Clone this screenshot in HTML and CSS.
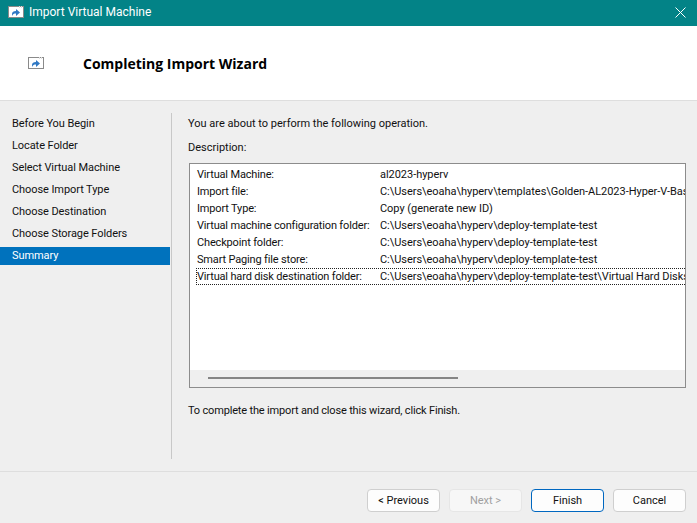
FILE: index.html
```html
<!DOCTYPE html>
<html lang="en">
<head>
<meta charset="utf-8">
<title>Import Virtual Machine</title>
<link rel="stylesheet" href="styles.css">
</head>
<body>
<div class="window">
  <header class="titlebar">
    <svg class="icon" width="16" height="12" viewBox="0 0 16 12"><rect x=".5" y=".5" width="15" height="11" fill="#fff" stroke="#8a8a8a"/><rect x="11" y="0" width="1" height="2" fill="#ddd"/><rect x="13" y="0" width="1" height="2" fill="#ddd"/><path d="M4 10V8c0-2 1.500-3 4-3V3l4 3.500L8 10V7.500c-2 0-3 .5-4 2.500z" fill="#2f78c4"/></svg>
    <span class="title">Import Virtual Machine</span>
    <svg class="close" width="11" height="11" viewBox="0 0 11 11"><path d="M.5.5l10 10M10.500.5l-10 10" stroke="#fff" fill="none"/></svg>
  </header>
  <section class="banner">
    <svg class="banner-icon" width="16" height="12" viewBox="0 0 16 12"><rect x=".5" y=".5" width="15" height="11" fill="#fff" stroke="#8a8a8a"/><rect x="11" y="0" width="1" height="2" fill="#ddd"/><rect x="13" y="0" width="1" height="2" fill="#ddd"/><path d="M4 10V8c0-2 1.500-3 4-3V3l4 3.500L8 10V7.500c-2 0-3 .5-4 2.500z" fill="#2f78c4"/></svg>
    <h1 class="heading">Completing Import Wizard</h1>
  </section>
  <main class="body">
    <nav class="steps">
      <div class="step">Before You Begin</div>
      <div class="step">Locate Folder</div>
      <div class="step">Select Virtual Machine</div>
      <div class="step">Choose Import Type</div>
      <div class="step">Choose Destination</div>
      <div class="step">Choose Storage Folders</div>
      <div class="step current">Summary</div>
    </nav>
    <div class="content">
      <p class="intro">You are about to perform the following operation.</p>
      <p class="desc">Description:</p>
      <div class="listbox">
        <div class="rows">
          <div class="row"><span class="key">Virtual Machine:</span><span class="val">al2023-hyperv</span></div>
          <div class="row"><span class="key">Import file:</span><span class="val">C:\Users\eoaha\hyperv\templates\Golden-AL2023-Hyper-V-Bas</span></div>
          <div class="row"><span class="key">Import Type:</span><span class="val">Copy (generate new ID)</span></div>
          <div class="row"><span class="key">Virtual machine configuration folder:</span><span class="val">C:\Users\eoaha\hyperv\deploy-template-test</span></div>
          <div class="row"><span class="key">Checkpoint folder:</span><span class="val">C:\Users\eoaha\hyperv\deploy-template-test</span></div>
          <div class="row"><span class="key">Smart Paging file store:</span><span class="val">C:\Users\eoaha\hyperv\deploy-template-test</span></div>
          <div class="row focused"><span class="key">Virtual hard disk destination folder:</span><span class="val">C:\Users\eoaha\hyperv\deploy-template-test\Virtual Hard Disks</span></div>
        </div>
        <div class="hscroll"><div class="thumb"></div></div>
      </div>
      <p class="outro">To complete the import and close this wizard, click Finish.</p>
    </div>
  </main>
  <footer class="footer">
    <button class="btn">&lt; Previous</button>
    <button class="btn" disabled>Next &gt;</button>
    <button class="btn primary">Finish</button>
    <button class="btn">Cancel</button>
  </footer>
</div>
</body>
</html>
```
FILE: styles.css
```css
* { box-sizing: border-box; }
html, body { margin: 0; padding: 0; }
body {
  width: 697px; height: 523px; overflow: hidden;
  font-family: Roboto, "Open Sans", sans-serif;
  font-size: 11px; color: #111; background: #efefef;
}
.window { display: flex; flex-direction: column; height: 523px; }
.titlebar {
  height: 26px; flex: none; background: #038387; color: #fff;
  display: flex; align-items: center; padding: 0 11px 2px 8px;
}
.icon { flex: none; margin-right: 5px; }
.title { font-size: 12px; flex: 1; }
.close { flex: none; }
.banner {
  height: 75px; flex: none; background: #fff; border-bottom: 1px solid #dedede;
  display: flex; align-items: center; padding: 0 0 1px 28px;
}
.banner-icon { flex: none; margin-right: 39px; }
.heading { margin: 2px 0 0; font-family: "Open Sans", sans-serif; font-size: 14px; font-weight: 700; color: #000; }
.body { flex: 1; display: flex; min-height: 0; padding-top: 12px; }
.steps {
  width: 170px; flex: none; display: flex; flex-direction: column;
}
.step { height: 22px; line-height: 22px; padding-left: 12px; white-space: nowrap; letter-spacing: -0.08px; }
.step.current { background: #0072bd; color: #fff; height: 18px; line-height: 18px; margin-top: 2px; }
.content {
  flex: 1; margin: 0 0 12px 1px; border-left: 1px solid #c8c8c8; padding: 0 11px 0 16px;
  display: flex; flex-direction: column; min-width: 0;
}
.intro { margin: 3px 0 0; line-height: 16px; }
.desc { margin: 8px 0 0; line-height: 16px; }
.listbox {
  margin: 7px 0 0 1px; height: 225px; flex: none; background: #fff;
  border: 1px solid #8c8c8c; display: flex; flex-direction: column; overflow: hidden;
}
.rows { flex: 1; padding: 2px 0 0 6px; }
.row { display: flex; height: 17px; line-height: 17px; padding: 0 0 0 1px; white-space: nowrap; overflow: hidden; }
.row.focused { border: 1px dotted #222; border-right: 0; padding: 0; margin-top: 0; line-height: 15px; }
.key { width: 183px; flex: none; letter-spacing: -0.16px; }
.val { flex: none; letter-spacing: -0.04px; }
.hscroll { height: 17px; flex: none; background: #efefef; padding: 7px 0 0 18px; }
.thumb { width: 250px; height: 2px; background: #858585; }
.outro { margin: 15px 0 0; line-height: 16px; letter-spacing: -0.17px; }
.footer {
  height: 52px; flex: none; border-top: 1px solid #dedede;
  display: flex; justify-content: flex-end; gap: 9px; padding: 17px 11px 0 0;
}
.btn {
  width: 73px; height: 23px; padding: 0; font: inherit; color: #111; background: #fdfdfd;
  border: 1px solid #cfcfcf; border-radius: 4px;
}
.btn.primary { border-color: #0067c0; }
.btn:disabled { background: #f7f7f7; border-color: #e6e6e6; color: #a0a0a0; }
```
